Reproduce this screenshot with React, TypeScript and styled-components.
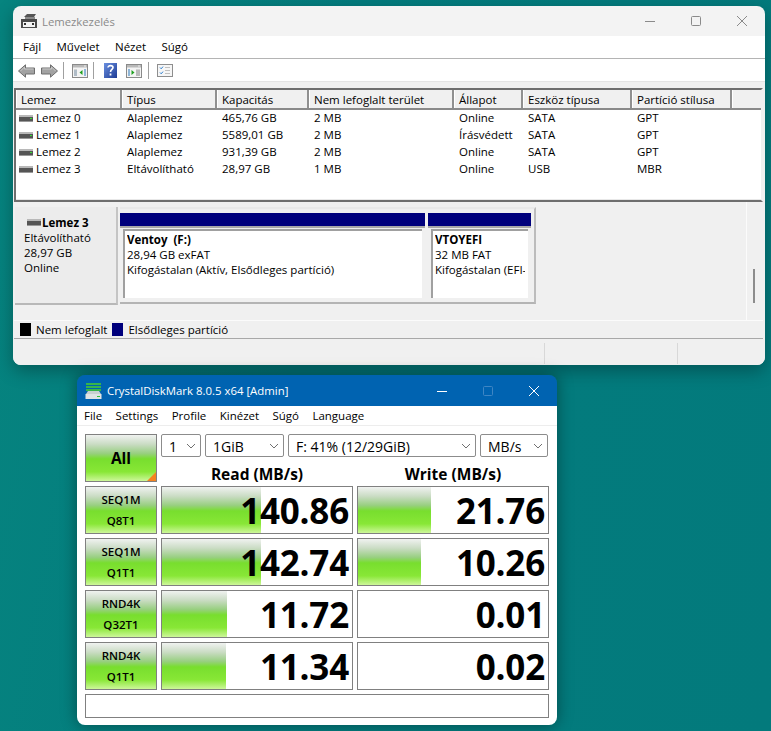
import React from "react";
import styled, { createGlobalStyle, css } from "styled-components";

const UI = `"Open Sans", "Noto Sans", Roboto, sans-serif`;

const Global = createGlobalStyle`
  html, body { margin: 0; padding: 0; height: 100%; }
  body {
    width: 771px; height: 731px; overflow: hidden;
    font-family: ${UI}; font-size: 11.5px; color: #000;
    background: linear-gradient(100deg, #06847f 0%, #037c7e 40%, #037a7c 100%);
  }
`;

const Desktop = styled.div`position: relative; width: 771px; height: 731px; overflow: hidden;`;

const Win = styled.section<{ $x: number; $y: number; $w: number; $h: number; $depth: string }>`
  position: absolute;
  left: ${p => p.$x}px; top: ${p => p.$y}px; width: ${p => p.$w}px; height: ${p => p.$h}px;
  border-radius: 8px; overflow: hidden; display: flex; flex-direction: column;
  box-shadow: ${p => p.$depth};
`;

/* ---------- Disk management ---------- */
const DmTitle = styled.header`
  flex: 0 0 30px; display: flex; align-items: center; background: #f3f3f3;
  padding-left: 8px; color: #8a8a8a; font-size: 11.3px; gap: 5px;
`;
const Spacer = styled.div`flex: 1;`;
const Caps = styled.div`display: flex; height: 30px; align-items: center;`;
const Cap = styled.div`width: 46px; height: 30px; display: flex; align-items: center; justify-content: center;`;

const DmMenu = styled.nav`
  flex: 0 0 23px; background: #fff; display: flex; align-items: center;
  padding-left: 10px; gap: 15.4px; border-bottom: 1px solid #b4b4b4; box-sizing: border-box;
  & > span { line-height: 22px; }
`;
const DmTools = styled.div`
  flex: 0 0 22px; box-sizing: border-box; background: #fff; display: flex; align-items: center; padding: 1px 0 0 5px;
`;
const ToolSep = styled.i`display: block; width: 1px; height: 17px; background: #a0a0a0; margin: 0 8px 0 5px;`;
const ToolGap = styled.span<{ $w: number }>`display: inline-block; width: ${p => p.$w}px;`;
const DmBody = styled.div`
  flex: 1; display: flex; flex-direction: column; background: #f0f0f0;
  border-top: 1px solid #e4e4e4; padding: 6px 2px 0 1px; min-height: 0;
`;

const List = styled.div`
  flex: 0 0 114px; box-sizing: border-box; background: #fff;
  border-top: 2px solid #6e6e6e; border-left: 2px solid #6e6e6e; border-bottom: 2px solid #6e6e6e;
  border-right: 2px solid #f0f0f0; display: flex; flex-direction: column;
`;
const cols = "106px 95px 92px 145px 69px 109px 100px 1fr";
const HeadRow = styled.div`
  display: grid; grid-template-columns: ${cols}; height: 18px; background: #f0f0f0;
  border-bottom: 2px solid #8a8a8a;
`;
const HeadCell = styled.div`
  padding-left: 4px; line-height: 20px; border-right: 2px solid #909090; border-left: 1px solid #fff;
  white-space: nowrap; overflow: hidden;
  &:last-child { border-right: 0; }
`;
const Row = styled.div`display: grid; grid-template-columns: ${cols}; height: 17px; background: #fff;`;
const Cell = styled.div`
  padding-left: 5px; line-height: 15px; height: 15px; white-space: nowrap; display: flex; align-items: center;
  & svg { margin: 1px 3px 0 -2px; }
`;
const ListFill = styled.div`flex: 1; background: #fff; border-bottom: 1px solid #e8e8e8;`;

const Lower = styled.div`
  flex: 0 0 118px; display: flex; align-items: flex-start; padding: 5px 0 0 1px; position: relative;
  border-right: 1px solid #fbfbfb; margin-right: 16px; box-sizing: border-box;
`;
const ScrollThumb = styled.div`
  position: absolute; right: -9px; top: 67px; width: 2px; height: 34px; background: #8c8c8c;
`;
const DiskLabel = styled.div`
  width: 103px; height: 98px; box-sizing: border-box; background: #ececec;
  border-bottom: 2px solid #b8b8b8; border-right: 2px solid #c4c4c4; padding: 7px 0 0 9px; line-height: 15px;
`;
const DiskName = styled.div`font-weight: 700; display: flex; align-items: center; gap: 1px; padding-left: 3px; height: 16px;`;
const Parts = styled.div`
  margin-left: 2px; width: 416px; height: 97px; box-sizing: border-box; background: #f0f0f0;
  border: 2px solid #bcbcbc; border-left: 0; border-top-color: #e9e9e9; display: flex; padding: 4px 3px 3px 0; gap: 3px;
  border-bottom-color: #b4b4b4;
`;
const Part = styled.div<{ $w: number }>`
  flex: 0 0 ${p => p.$w}px; min-width: 0; display: flex; flex-direction: column; box-sizing: border-box;
  height: 86px; background: #f0f0f0;
`;
const PartBar = styled.div`height: 13px; background: #00007c; flex: none; border-bottom: 2px solid #a8a8a8; box-sizing: content-box;`;
const PartBody = styled.div`
  margin: 1px 3px 0 3px; height: 69px; box-sizing: border-box; background: #fff;
  border-top: 2px solid #a0a0a0; border-left: 2px solid #a0a0a0; padding: 1px 3px 0 2px; line-height: 15px;
`;
const PartText = styled.div`white-space: nowrap; overflow: hidden;`;
const Strong = styled.div`font-weight: 700;`;
const Legend = styled.div`
  flex: 0 0 19px; display: flex; align-items: center; padding-left: 6px; box-sizing: border-box;
  border-top: 1px solid #fbfbfb; border-bottom: 1px solid #a8a8a8; gap: 5px;
`;
const Swatch = styled.i<{ $c: string }>`display: block; width: 11px; height: 13px; background: ${p => p.$c};`;
const LegendItem = styled.div`display: flex; align-items: center; gap: 5px;`;
const Status = styled.footer`
  flex: 1; display: grid; grid-template-columns: 1fr 133px 88px; margin: 4px -2px 0 -1px; background: #f0f0f0;
  & > div + div { border-left: 1px solid #d8d8d8; margin-bottom: 1px; }
`;

/* ---------- CrystalDiskMark ---------- */
const CdTitle = styled.header`
  flex: 0 0 31px; background: #0063b1; color: #fff; display: flex; align-items: center;
  padding-left: 8px; gap: 5px; font-size: 11.4px;
`;
const CdMenu = styled.nav`
  flex: 0 0 19px; background: #fff; display: flex; align-items: center; padding-left: 7px; gap: 13.4px;
  font-size: 11.5px;
`;
const CdBody = styled.div`
  flex: 1; background: #fff; border-top: 1px solid #ededed; padding: 8px 8px 7px;
  display: grid; grid-template-columns: 72px 192px 192px; column-gap: 4px; row-gap: 4px;
  grid-template-rows: 48px repeat(4, 48px) 24px;
`;
const greenBg = css`
  background: linear-gradient(180deg, #f0f2f0 0%, #cadcc4 20%, #98cf80 40%, #78de2e 52%, #88e736 80%, #cdf79a 100%);
`;
const AllBtn = styled.div`
  ${greenBg}; border: 1px solid #808080; box-sizing: border-box; position: relative;
  display: flex; align-items: center; justify-content: center; font-weight: 700; font-size: 15.5px;
  &::after {
    content: ""; position: absolute; right: 0; bottom: 0; width: 0; height: 0;
    border-left: 9px solid transparent; border-bottom: 9px solid #f5831f;
  }
`;
const Top = styled.div`grid-column: 2 / 4; display: flex; flex-direction: column;`;
const Selects = styled.div`display: grid; grid-template-columns: 40px 79px 188px 68px; column-gap: 4px; height: 24px;`;
const Sel = styled.div`
  border: 1px solid #8c8c8c; border-radius: 2px; box-sizing: border-box; display: flex; align-items: center;
  justify-content: space-between; padding: 2px 4px 0 7px; font-size: 14px; background: #fff; overflow: hidden; white-space: nowrap;
`;
const Heads = styled.div`display: grid; grid-template-columns: 192px 192px; column-gap: 4px; flex: 1; align-items: center;`;
const Head = styled.div`text-align: center; font-weight: 700; font-size: 15.5px; line-height: 24px; padding-top: 5px;`;
const Label = styled.div`
  ${greenBg}; border: 1px solid #808080; box-sizing: border-box; display: flex; flex-direction: column;
  align-items: center; justify-content: center; font-weight: 600; font-size: 11.5px; line-height: 21px;
`;
const Meter = styled.div`
  border: 1px solid #808080; box-sizing: border-box; position: relative; background: #fff;
  display: flex; justify-content: flex-end; align-items: center; padding: 1px 3px 0 0; overflow: hidden;
`;
const Bar = styled.div`
  position: absolute; left: 0; top: 0; bottom: 0;
  ${greenBg};
`;
const Num = styled.span`position: relative; font-weight: 700; font-size: 35px; line-height: 46px; letter-spacing: -0.2px;`;
const Comment = styled.div`grid-column: 1 / 4; border: 1px solid #808080; box-sizing: border-box;`;

/* ---------- drawings ---------- */
const DriveIcon = ({ led = true }: { led?: boolean }) => (
  <svg width="14" height="7" viewBox="0 0 14 7" style={{ flex: "none" }}>
    <rect x="0" y="0" width="14" height="2" fill="#b8b8b8" />
    <rect x="0" y="2" width="14" height="4" fill="#555" />
    <rect x="0" y="6" width="14" height="1" fill="#999" />
    {led && <rect x="11" y="3" width="2" height="1" fill="#35e035" />}
  </svg>
);
const DmIcon = () => (
  <svg width="16" height="15" viewBox="0 0 16 15" style={{ flex: "none", marginTop: 1 }}>
    <path d="M3 3 L6 0 H15 L13 3 Z" fill="#555" />
    <rect x="4" y="3" width="10" height="2" fill="#8a8a8a" />
    <rect x="0" y="5" width="16" height="9" fill="#4a4a4a" />
    <rect x="2" y="8" width="12" height="5" fill="#f4f4f4" />
    <rect x="3" y="9" width="2" height="2" fill="#333" />
    <rect x="11" y="9" width="2" height="2" fill="#333" />
  </svg>
);
const Arrow = ({ flip }: { flip?: boolean }) => (
  <svg width="17" height="14" viewBox="0 0 17 14" style={{ transform: flip ? "scaleX(-1)" : undefined }}>
    <path d="M0.5 7 L7.5 0.8 V4 H16.5 V10 H7.5 V13.2 Z" fill="#a2a2a2" stroke="#6e6e6e" />
    <path d="M2.5 7 L6.5 3 V5 H15.5" fill="none" stroke="#c8c8c8" />
  </svg>
);
const Panel = ({ mirror }: { mirror?: boolean }) => (
  <svg width="16" height="14" viewBox="0 0 16 14">
    <rect x="0.5" y="0.5" width="15" height="13" fill="#f4f4f4" stroke="#8a8a8a" />
    <rect x="1" y="1" width="14" height="2.5" fill="#b9b9b9" />
    <rect x="12" y="1.5" width="2" height="1" fill="#eee" />
    {mirror ? (
      <>
        <rect x="2" y="5" width="2" height="7" fill="#8fb6d8" />
        <path d="M5.5 6 L8.5 8.5 L5.5 11 Z" fill="#1fa01f" />
        <rect x="10" y="5" width="4" height="7" fill="#d5d5d5" />
        <path d="M10 7 H14 M10 9 H14 M10 11 H14" stroke="#888" strokeWidth="0.7" />
      </>
    ) : (
      <>
        <rect x="2" y="5" width="3" height="7" fill="#d5d5d5" />
        <path d="M2 7 H5 M2 9 H5 M2 11 H5" stroke="#6e8fb0" strokeWidth="0.7" />
        <path d="M10.5 6 L7.5 8.5 L10.5 11 Z" fill="#1fa01f" />
        <rect x="12" y="5" width="2" height="7" fill="#8fb6d8" />
      </>
    )}
  </svg>
);
const HelpIcon = () => (
  <svg width="13" height="15" viewBox="0 0 13 15">
    <defs>
      <linearGradient id="hb" x1="0" y1="0" x2="1" y2="1">
        <stop offset="0" stopColor="#6a8fe0" />
        <stop offset="1" stopColor="#1d3b94" />
      </linearGradient>
    </defs>
    <rect width="13" height="15" fill="url(#hb)" />
    <path d="M4 4.5 C4 2 9 2 9 4.6 C9 6.5 6.5 6.5 6.5 9" fill="none" stroke="#fff" strokeWidth="1.6" />
    <rect x="5.6" y="10.5" width="1.8" height="2" fill="#fff" />
  </svg>
);
const CheckList = () => (
  <svg width="16" height="13" viewBox="0 0 16 13">
    <rect x="0.5" y="0.5" width="15" height="12" fill="#f6f6f6" stroke="#8e8e8e" />
    <path d="M3 3.5 L4.2 4.8 L6 2.6 M3 8.5 L4.2 9.8 L6 7.6" fill="none" stroke="#2e7fd0" strokeWidth="1" />
    <path d="M8 3.5 H13 M8 6.5 H13 M8 9.5 H13" stroke="#c0c0c0" />
  </svg>
);
const Chevron = () => (
  <svg width="10" height="6" viewBox="0 0 10 6" style={{ flex: "none", marginTop: -2 }}>
    <path d="M1 1 L5 5 L9 1" fill="none" stroke="#707070" />
  </svg>
);
const CdLogo = () => (
  <svg width="17" height="16" viewBox="0 0 17 16" style={{ flex: "none" }}>
    <rect x="1" y="0" width="15" height="2" fill="#36b54a" />
    <rect x="1" y="3" width="15" height="2" fill="#36b54a" />
    <rect x="1" y="6" width="15" height="2" fill="#36b54a" />
    <path d="M3 8 H14 L16 11 H1 Z" fill="#c8d0d0" />
    <rect x="0.5" y="11" width="16" height="5" fill="#dfe4e4" />
    <rect x="12" y="13" width="3" height="1" fill="#38c038" />
  </svg>
);
const Glyph = ({ kind, color }: { kind: "min" | "max" | "close"; color: string }) => (
  <svg width="12" height="12" viewBox="0 0 12 12">
    {kind === "min" && <path d="M1 6.5 H11" stroke={color} />}
    {kind === "max" && <rect x="1.5" y="1.5" width="9" height="9" rx="1" fill="none" stroke={color} />}
    {kind === "close" && <path d="M1 1 L11 11 M11 1 L1 11" stroke={color} />}
  </svg>
);

/* ---------- data ---------- */
const heads = ["Lemez", "Típus", "Kapacitás", "Nem lefoglalt terület", "Állapot", "Eszköz típusa", "Partíció stílusa", ""];
const disks = [
  ["Lemez 0", "Alaplemez", "465,76 GB", "2 MB", "Online", "SATA", "GPT"],
  ["Lemez 1", "Alaplemez", "5589,01 GB", "2 MB", "Írásvédett", "SATA", "GPT"],
  ["Lemez 2", "Alaplemez", "931,39 GB", "2 MB", "Online", "SATA", "GPT"],
  ["Lemez 3", "Eltávolítható", "28,97 GB", "1 MB", "Online", "USB", "MBR"],
];
const results = [
  { a: "SEQ1M", b: "Q8T1", r: "140.86", rw: 99, w: "21.76", ww: 73 },
  { a: "SEQ1M", b: "Q1T1", r: "142.74", rw: 99, w: "10.26", ww: 63 },
  { a: "RND4K", b: "Q32T1", r: "11.72", rw: 65, w: "0.01", ww: 0 },
  { a: "RND4K", b: "Q1T1", r: "11.34", rw: 64, w: "0.02", ww: 0 },
];

export default function App() {
  return (
    <Desktop>
      <Global />
      <Win $x={13} $y={6} $w={752} $h={359} $depth="0 6px 18px rgba(0,0,0,.3)">
        <DmTitle>
          <DmIcon />
          <span>Lemezkezelés</span>
          <Spacer />
          <Caps>
            <Cap><Glyph kind="min" color="#8a8a8a" /></Cap>
            <Cap><Glyph kind="max" color="#8a8a8a" /></Cap>
            <Cap><Glyph kind="close" color="#8a8a8a" /></Cap>
          </Caps>
        </DmTitle>
        <DmMenu>
          <span>Fájl</span><span>Művelet</span><span>Nézet</span><span>Súgó</span>
        </DmMenu>
        <DmTools>
          <Arrow /><ToolGap $w={6} /><Arrow flip />
          <ToolSep />
          <Panel />
          <ToolSep />
          <ToolGap $w={2} />
          <HelpIcon /><ToolGap $w={9} /><Panel mirror />
          <ToolGap $w={1} />
          <ToolSep />
          <CheckList />
        </DmTools>
        <DmBody>
          <List>
            <HeadRow>{heads.map(h => <HeadCell key={h || "x"}>{h}</HeadCell>)}</HeadRow>
            {disks.map((d, i) => (
              <Row key={d[0]}>
                {d.map((c, j) => (
                  <Cell key={j}>{j === 0 && <DriveIcon led={i < 3} />}{c}</Cell>
                ))}
              </Row>
            ))}
            <ListFill />
          </List>
          <Lower>
            <DiskLabel>
              <DiskName><DriveIcon led={false} />Lemez 3</DiskName>
              <div>Eltávolítható</div>
              <div>28,97 GB</div>
              <div>Online</div>
            </DiskLabel>
            <Parts>
              <Part $w={305}>
                <PartBar />
                <PartBody>
                  <PartText>
                    <Strong>Ventoy&nbsp; (F:)</Strong>
                    <div>28,94 GB exFAT</div>
                    <div>Kifogástalan (Aktív, Elsődleges partíció)</div>
                  </PartText>
                </PartBody>
              </Part>
              <Part $w={103}>
                <PartBar />
                <PartBody>
                  <PartText>
                    <Strong>VTOYEFI</Strong>
                    <div>32 MB FAT</div>
                    <div>Kifogástalan (EFI-rendszerpartíció)</div>
                  </PartText>
                </PartBody>
              </Part>
            </Parts>
            <ScrollThumb />
          </Lower>
          <Legend>
            <LegendItem><Swatch $c="#000" />Nem lefoglalt</LegendItem>
            <LegendItem><Swatch $c="#00007c" />Elsődleges partíció</LegendItem>
          </Legend>
          <Status><div /><div /><div /></Status>
        </DmBody>
      </Win>

      <Win $x={77} $y={375} $w={480} $h={350} $depth="0 0 16px rgba(0,0,0,.4)">
        <CdTitle>
          <CdLogo />
          <span>CrystalDiskMark 8.0.5 x64 [Admin]</span>
          <Spacer />
          <Caps>
            <Cap><Glyph kind="min" color="#fff" /></Cap>
            <Cap><Glyph kind="max" color="#3f86c4" /></Cap>
            <Cap><Glyph kind="close" color="#fff" /></Cap>
          </Caps>
        </CdTitle>
        <CdMenu>
          <span>File</span><span>Settings</span><span>Profile</span><span>Kinézet</span><span>Súgó</span><span>Language</span>
        </CdMenu>
        <CdBody>
          <AllBtn>All</AllBtn>
          <Top>
            <Selects>
              <Sel>1<Chevron /></Sel>
              <Sel>1GiB<Chevron /></Sel>
              <Sel>F: 41% (12/29GiB)<Chevron /></Sel>
              <Sel>MB/s<Chevron /></Sel>
            </Selects>
            <Heads><Head>Read (MB/s)</Head><Head>Write (MB/s)</Head></Heads>
          </Top>
          {results.map(r => (
            <React.Fragment key={r.a + r.b}>
              <Label><span>{r.a}</span><span>{r.b}</span></Label>
              <Meter><Bar style={{ width: r.rw }} /><Num>{r.r}</Num></Meter>
              <Meter><Bar style={{ width: r.ww }} /><Num>{r.w}</Num></Meter>
            </React.Fragment>
          ))}
          <Comment />
        </CdBody>
      </Win>
    </Desktop>
  );
}
